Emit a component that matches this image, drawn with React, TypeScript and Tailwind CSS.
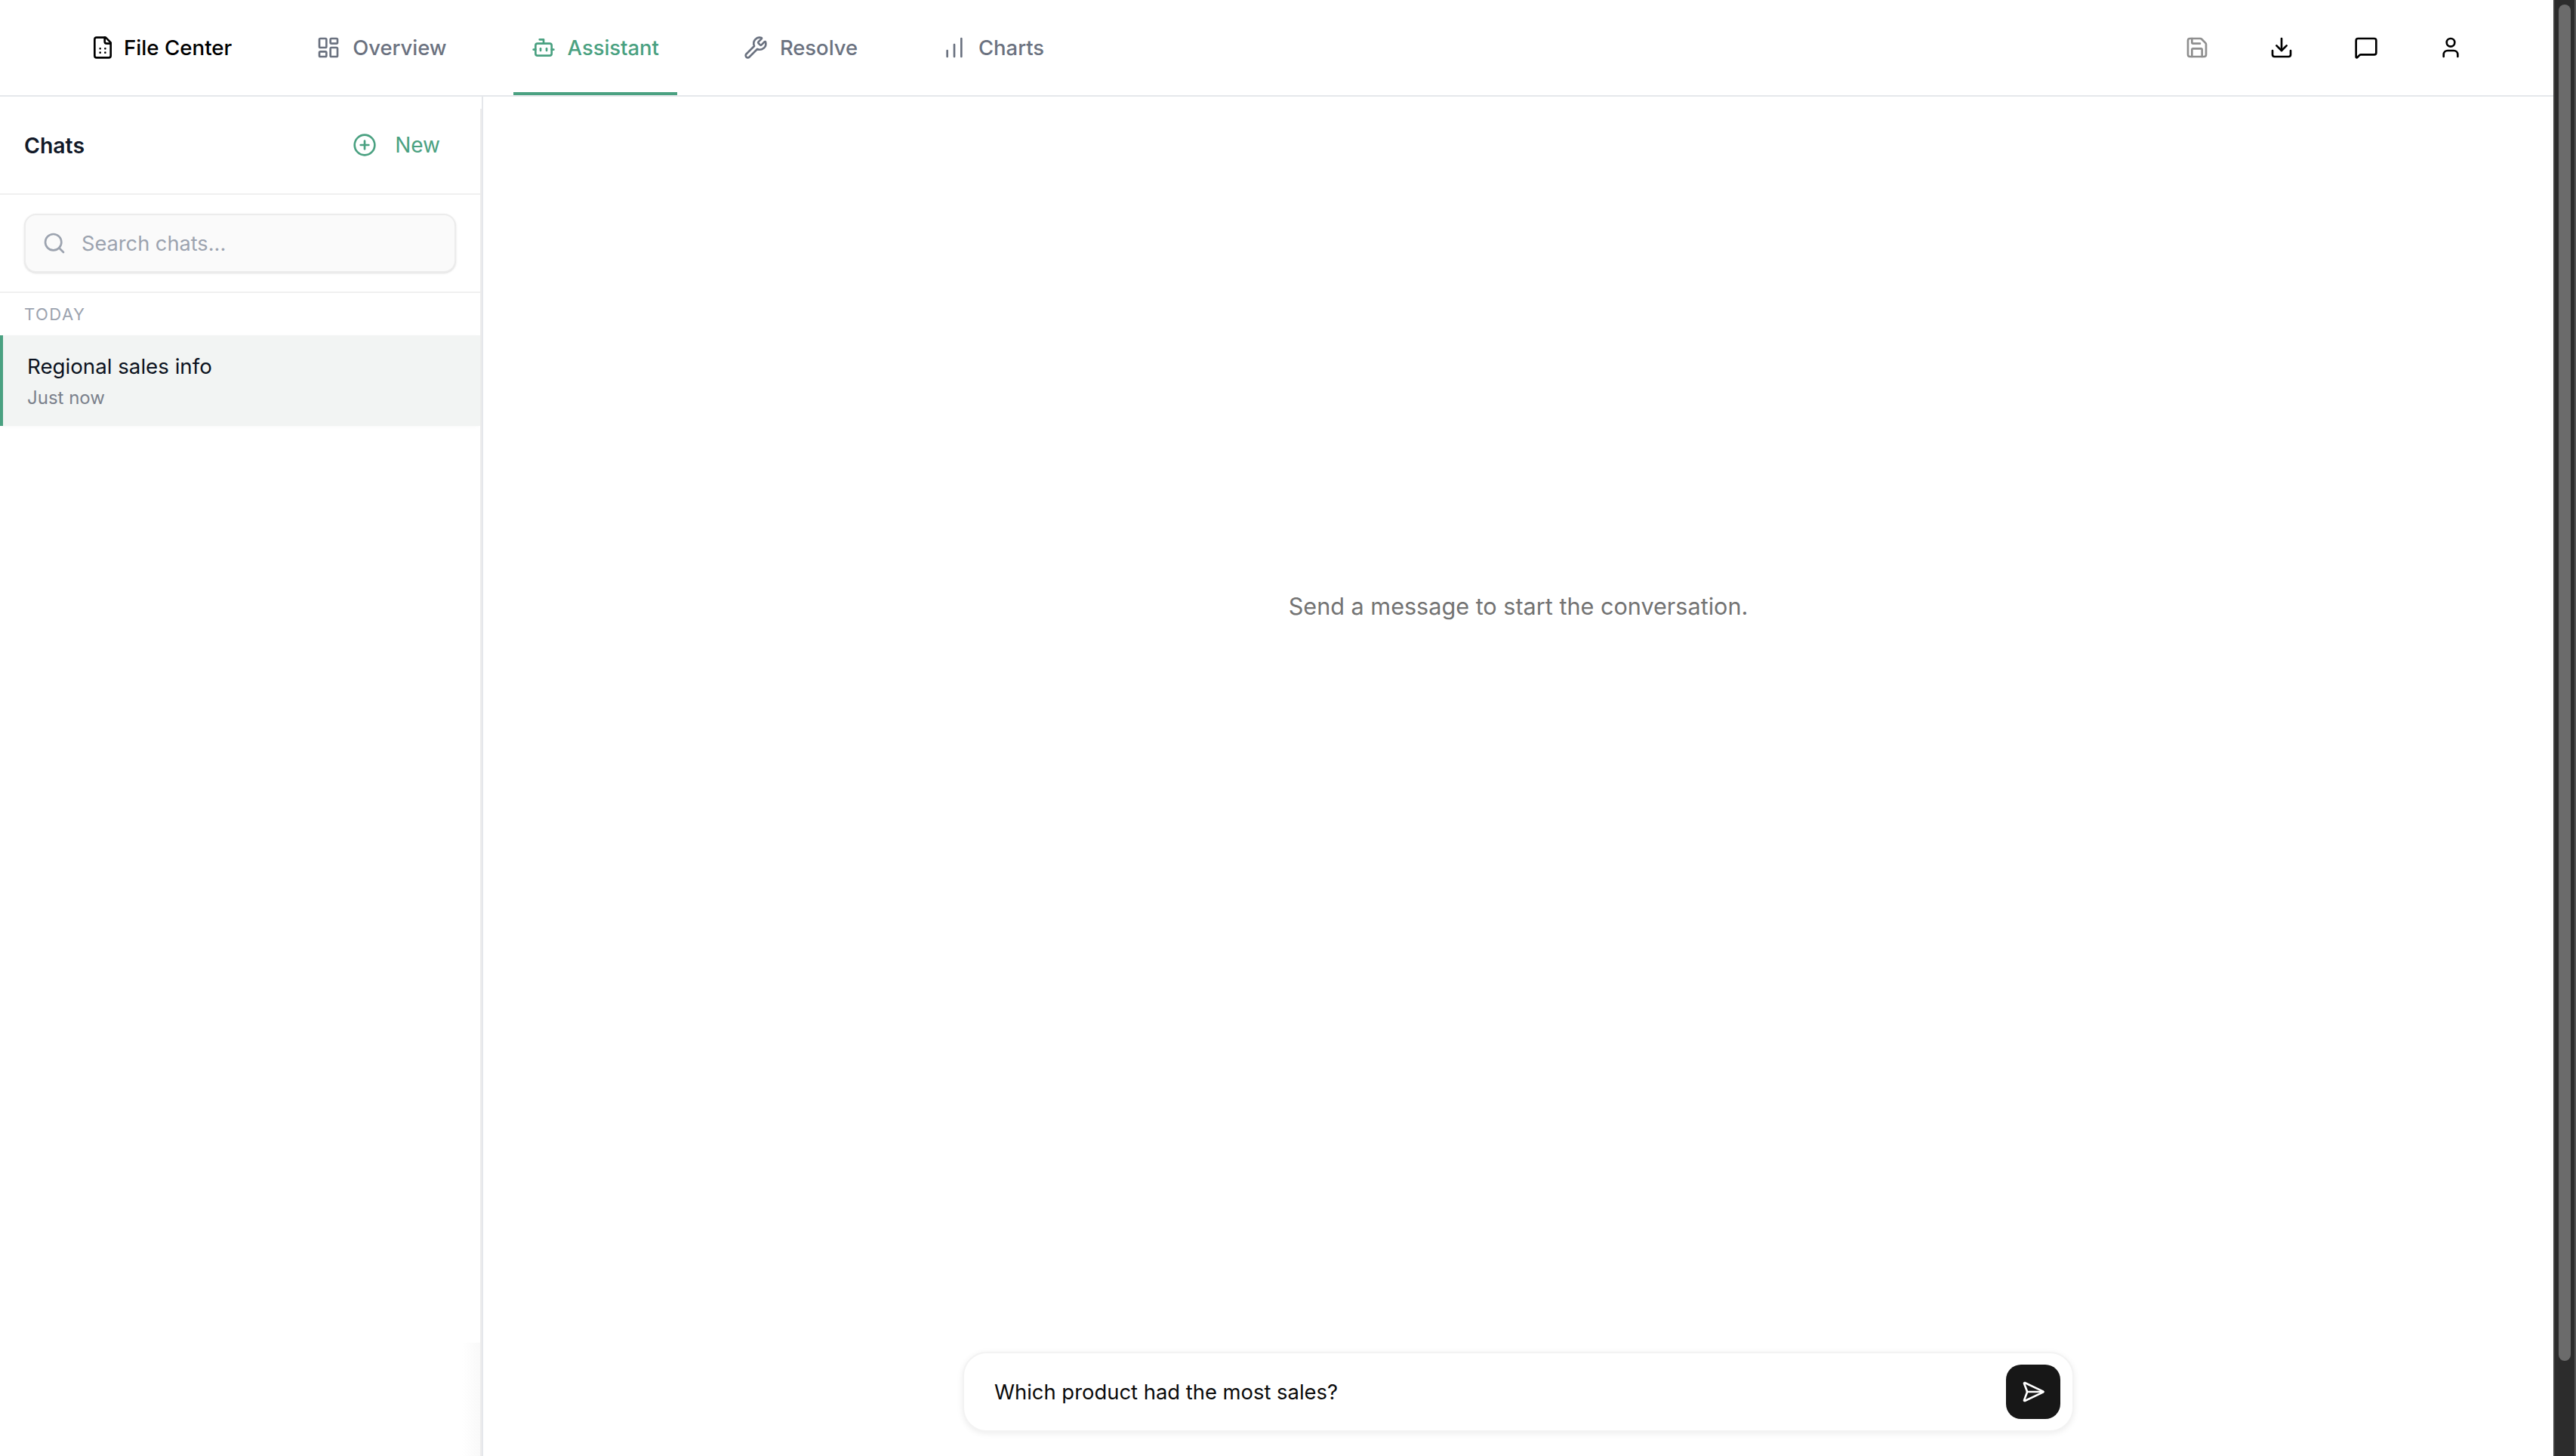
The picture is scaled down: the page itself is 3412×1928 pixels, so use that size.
import React from "react";
import { LayoutDashboard, Bot, Wrench, ChartNoAxesColumnIncreasing, Save, Download, MessageSquare, User, CirclePlus, Search, SendHorizontal } from "lucide-react";

function Tab({ icon, label, active }: { icon: React.ReactNode; label: string; active?: boolean }) {
  return (
    <button className={active ? "relative flex h-[126px] items-center gap-4 px-6 text-[#4aa181]" : "flex h-[126px] items-center gap-4 px-6 text-[#6b7280]"}>
      {icon}
      <span className="pt-[2px] text-[27.4px] font-medium leading-none">{label}</span>
      {active && <span className="absolute bottom-0 left-0 right-0 h-1 bg-[#4aa181]" />}
    </button>
  );
}

function FileDots() {
  return (
    <svg width="32" height="32" viewBox="0 0 24 24" fill="none" stroke="currentColor" strokeWidth="2" strokeLinecap="round" strokeLinejoin="round">
      <path d="M15 2H6a2 2 0 0 0-2 2v16a2 2 0 0 0 2 2h12a2 2 0 0 0 2-2V7z" />
      <path d="M14 2v4a2 2 0 0 0 2 2h4" />
      <path d="M9.5 13h.01M14.5 13h.01M9.5 17h.01M14.5 17h.01" />
    </svg>
  );
}

export default function App() {
  return (
    <div className="flex h-[1928px] w-[3412px] overflow-hidden bg-white font-['Inter',sans-serif]">
      <div className="flex min-w-0 flex-1 flex-col">
        <header className="flex h-[128px] shrink-0 items-center justify-between border-b-2 border-[#e5e7eb] px-24">
          <nav className="flex items-center gap-16">
            <button className="flex h-[126px] items-center gap-3 px-6 text-black">
              <FileDots />
              <span className="pt-[2px] text-[27.7px] font-medium leading-none">File Center</span>
            </button>
            <Tab icon={<LayoutDashboard size={32} />} label="Overview" />
            <Tab active icon={<Bot size={32} />} label="Assistant" />
            <Tab icon={<Wrench size={32} />} label="Resolve" />
            <Tab icon={<ChartNoAxesColumnIncreasing size={32} />} label="Charts" />
          </nav>
          <div className="flex items-center gap-8">
            <button className="flex h-20 w-20 items-center justify-center text-[#8f8f8f]"><Save size={32} /></button>
            <button className="flex h-20 w-20 items-center justify-center text-black"><Download size={32} /></button>
            <button className="flex h-20 w-20 items-center justify-center text-black"><MessageSquare size={32} /></button>
            <button className="flex h-20 w-20 items-center justify-center text-black"><User size={32} /></button>
          </div>
        </header>
        <div className="flex min-h-0 flex-1">
          <aside className="relative flex w-[640px] shrink-0 flex-col border-r-2 border-[#e5e7eb]">
            <div className="absolute bottom-0 right-0 top-4 w-[2px] bg-[#ececec]" />
            <div className="absolute bottom-0 right-[2px] h-[150px] w-[24px] bg-linear-to-r from-transparent to-[#f9f9f9]" />
            <div className="mr-[2px] flex h-[130px] shrink-0 items-center justify-between border-b-2 border-[#f0f0f0] pl-8 pr-[53px]">
              <span className="pt-[2px] text-[28.4px] font-semibold leading-none text-[#111827]">Chats</span>
              <button className="flex items-center gap-[24px] text-[#4aa181]">
                <CirclePlus size={32} />
                <span className="text-[28px] leading-none">New</span>
              </button>
            </div>
            <div className="mr-[2px] shrink-0 border-b-2 border-[#f0f0f0] py-[25px] pl-8 pr-8">
              <div className="flex h-[78px] items-center gap-[20px] rounded-[16px] border-2 border-[#ececec] bg-[#fafafa] pl-[22px] pr-[19px] shadow-sm">
                <Search size={32} className="text-[#9ca3af]" />
                <span className="pt-[2px] text-[27.2px] leading-none text-[#9ca3af]">Search chats...</span>
              </div>
            </div>
            <div className="px-8 py-[14px] text-[22px] leading-[28px] tracking-[1.5px] text-[#9ca3af]">TODAY</div>
            <div className="mr-[2px] flex h-[120px] flex-col gap-[6px] border-l-4 border-[#4aa181] bg-[#f2f4f3] pl-[32px] pt-[21px] shadow-[0_1px_6px_-2px_rgba(0,0,0,0.06)]">
              <span className="text-[27.7px] leading-[40px] text-[#0b1220]">Regional sales info</span>
              <span className="text-[24px] leading-[32px] text-[#7b818c]">Just now</span>
            </div>
          </aside>
          <main className="flex min-w-0 flex-1 flex-col items-center">
            <div className="flex h-[697px] shrink-0 items-end">
              <p className="text-[30.6px] leading-[44px] text-[#737373]">Send a message to start the conversation.</p>
            </div>
            <div className="mb-[32px] mt-auto flex h-[106px] w-[1472px] items-center justify-between rounded-[32px] border-2 border-[#f3f3f3] bg-white pl-10 pr-4 shadow-[0_2px_8px_rgba(0,0,0,0.08)]">
              <span className="pt-[2px] text-[27.4px] leading-none text-[#0a0a0a]">Which product had the most sales?</span>
              <button className="flex h-[72px] w-[72px] items-center justify-center rounded-[20px] bg-[#171717] text-white"><SendHorizontal size={32} /></button>
            </div>
          </main>
        </div>
      </div>
      <div className="flex w-[30px] shrink-0 justify-center border-x-2 border-l-[#414141] border-r-[#555555] bg-[#2c2c2c] pt-[6px]">
        <div className="h-[1796px] w-4 rounded-full bg-[#6b6b6b]" />
      </div>
    </div>
  );
}
